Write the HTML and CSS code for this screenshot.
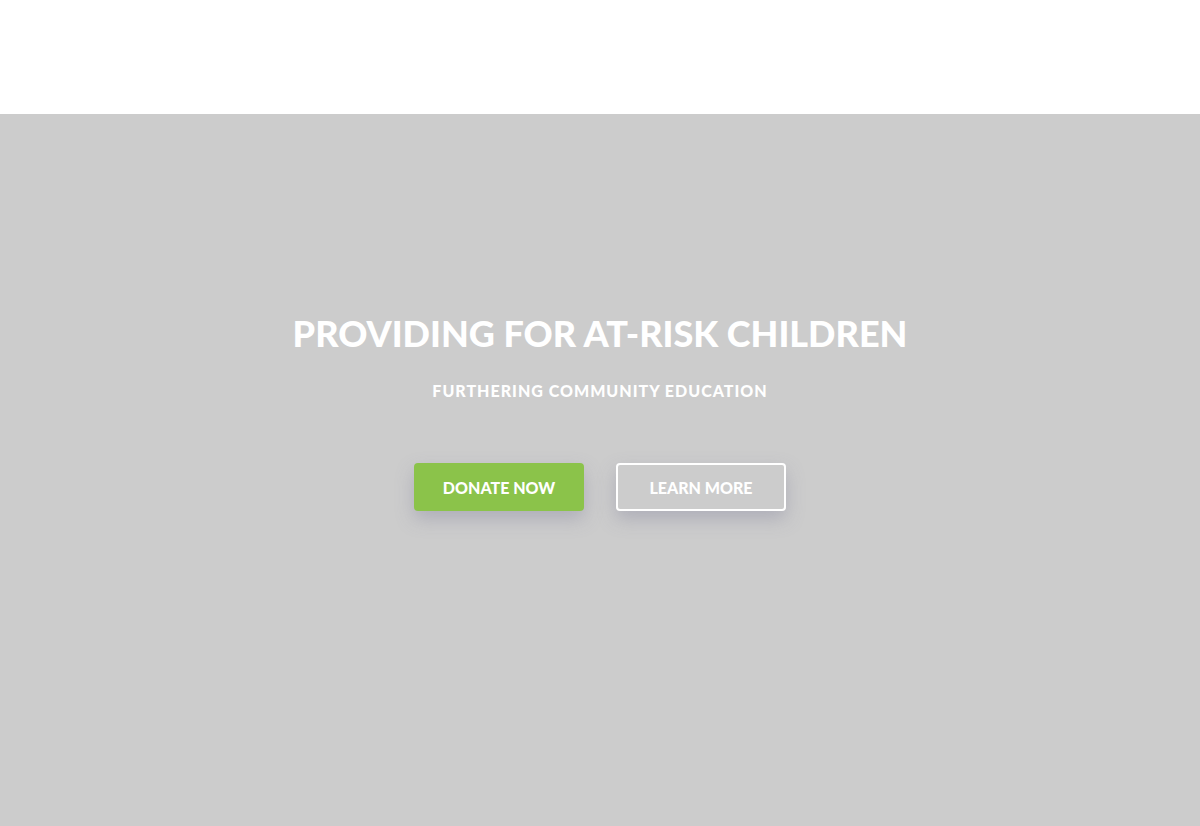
FILE: index.html
```html
<!DOCTYPE html>
<html>
<head>
<meta charset="utf-8">
<link rel="stylesheet" href="styles.css">
</head>
<body>
<header class="topbar"></header>
<section class="hero">
  <h1 class="hero-title">PROVIDING FOR AT-RISK CHILDREN</h1>
  <p class="hero-sub">FURTHERING COMMUNITY EDUCATION</p>
  <div class="hero-actions">
    <a class="btn btn-primary">DONATE NOW</a>
    <a class="btn btn-outline">LEARN MORE</a>
  </div>
</section>
</body>
</html>
```
FILE: styles.css
```css
html, body { margin: 0; padding: 0; }
body { font-family: "Lato", "Open Sans", sans-serif; background: #fff; }
.topbar { height: 114px; background: #fff; }
.hero {
  height: 712px;
  background: #cccccc;
  display: flex;
  flex-direction: column;
  align-items: center;
  box-sizing: border-box;
  padding-top: 197px;
  color: #fff;
}
.hero-title {
  margin: 0;
  font-size: 36px;
  font-weight: 900;
  line-height: 44px;
  letter-spacing: 0;
}
.hero-sub {
  margin: 26px 0 0;
  font-size: 16px;
  font-weight: 900;
  letter-spacing: 1px;
  line-height: 20px;
}
.hero-actions {
  display: flex;
  gap: 32px;
  margin-top: 62px;
}
.btn {
  box-sizing: border-box;
  width: 170px;
  height: 48px;
  border-radius: 4px;
  display: flex;
  align-items: center;
  justify-content: center;
  font-size: 16px;
  font-weight: 900;
  color: #fff;
  box-shadow: 0 8px 18px rgba(120, 120, 150, 0.35);
}
.btn-primary { background: #8bc34a; }
.btn-outline { border: 2px solid #fff; }
```
